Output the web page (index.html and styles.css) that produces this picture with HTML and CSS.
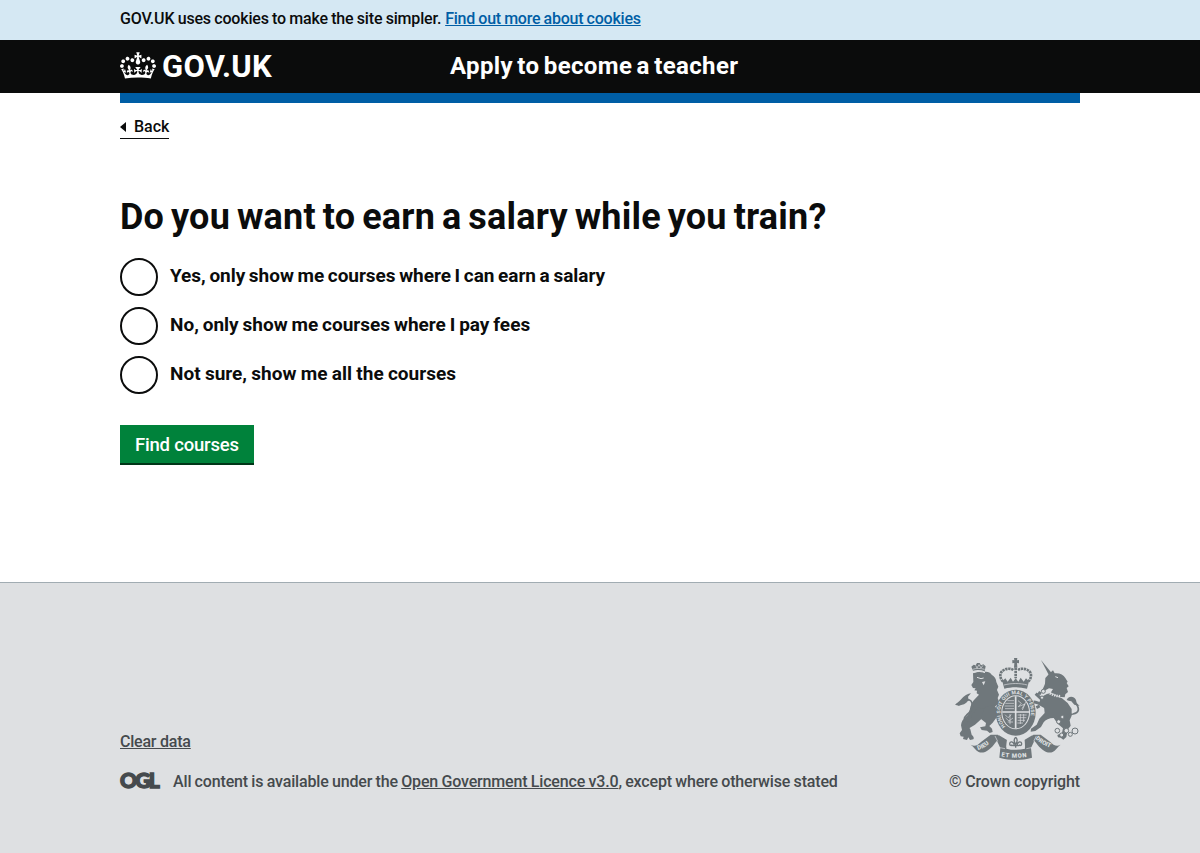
FILE: index.html
```html
<!DOCTYPE html>
<html lang="en">
<head>
<meta charset="utf-8">
<title>Do you want to earn a salary while you train?</title>
<link rel="stylesheet" href="styles.css">
</head>
<body>
<div class="cookie"><p class="container"><span class="cookie-text">GOV.UK uses cookies to make the site simpler.</span> <a class="cookie-link" href="#">Find out more about cookies</a></p></div>
<header class="header">
  <div class="container header-row">
    <a class="logo" href="#">
      <svg class="crown" viewBox="0 0 132 97" width="36" height="27" aria-hidden="true"><path fill="currentColor" fill-rule="evenodd" d="M25 30.2c3.5 1.5 7.7-.2 9.1-3.7 1.5-3.6-.2-7.8-3.9-9.2-3.6-1.4-7.6.3-9.1 3.9-1.4 3.5.3 7.5 3.9 9zM9 39.5c3.6 1.5 7.8-.2 9.2-3.7 1.5-3.6-.2-7.8-3.9-9.1-3.6-1.5-7.6.2-9.1 3.8-1.4 3.5.3 7.5 3.8 9zM4.4 57.2c3.5 1.5 7.7-.2 9.1-3.8 1.5-3.6-.2-7.7-3.9-9.1-3.5-1.5-7.6.3-9.1 3.8-1.4 3.5.3 7.6 3.9 9.1zm38.3-21.4c3.5 1.5 7.7-.2 9.1-3.8 1.5-3.6-.2-7.7-3.9-9.1-3.6-1.5-7.6.3-9.1 3.8-1.3 3.6.4 7.7 3.9 9.1zm64.4-5.6c-3.6 1.5-7.8-.2-9.1-3.7-1.5-3.6.2-7.8 3.8-9.2 3.6-1.4 7.7.3 9.2 3.9 1.3 3.5-.4 7.5-3.9 9zm15.9 9.3c-3.6 1.5-7.7-.2-9.1-3.7-1.5-3.6.2-7.8 3.7-9.1 3.6-1.5 7.7.2 9.2 3.8 1.5 3.5-.3 7.5-3.8 9zm4.7 17.7c-3.6 1.5-7.8-.2-9.2-3.8-1.5-3.6.2-7.7 3.9-9.1 3.6-1.5 7.7.3 9.2 3.8 1.3 3.5-.4 7.6-3.9 9.1zM89.3 35.8c-3.6 1.5-7.8-.2-9.2-3.8-1.4-3.6.2-7.7 3.9-9.1 3.6-1.5 7.7.3 9.2 3.8 1.4 3.6-.3 7.7-3.9 9.1zM69.7 17.7l8.9 4.7V9.3l-8.9 2.8c-.2-.3-.5-.6-.9-.9L72.4 0H59.6l3.5 11.2c-.3.3-.6.5-.9.9l-8.8-2.8v13.1l8.8-4.7c.3.3.6.7.9.9l-5 15.4v.1c-.2.8-.4 1.6-.4 2.4 0 4.1 3.1 7.5 7 8.1h.2c.3 0 .7.1 1 .1.4 0 .7 0 1-.1h.2c4-.6 7.1-4.1 7.1-8.1 0-.8-.1-1.7-.4-2.4V34l-5.1-15.4c.4-.2.7-.6 1-.9zM66 92.8c16.9 0 32.8 1.1 47.1 3.2 4-16.9 8.9-26.7 14-33.5l-9.6-3.4c1 4.9 1.1 7.2 0 10.2-1.5-1.4-3-4.3-4.2-8.7L108.6 76c2.8-2 5-3.2 7.5-3.3-4.4 9.4-10 11.9-13.6 11.2-4.3-.8-6.3-4.6-5.6-7.9 1-4.7 5.7-5.9 8-.5 4.3-8.7-3-11.4-7.6-8.8 7.1-7.2 7.9-13.5 2.1-21.1-8 6.1-8.1 12.3-4.5 20.8-4.7-5.4-12.1-2.5-9.5 6.2 3.4-5.2 7.9-2 7.2 3.1-.6 4.3-6.4 7.8-13.5 7.2-10.3-.9-10.9-8-11.2-13.8 2.5-.5 7.1 1.8 11 7.3L80.2 60c-4.1 4.4-8 5.3-12.3 5.4 1.4-4.4 8-11.6 8-11.6H55.5s6.4 7.2 7.9 11.6c-4.2-.1-8-1-12.3-5.4l1.4 16.4c3.9-5.5 8.5-7.7 10.9-7.3-.3 5.8-.9 12.8-11.1 13.8-7.2.6-12.9-2.9-13.5-7.2-.7-5 3.8-8.3 7.1-3.1 2.7-8.7-4.6-11.6-9.4-6.2 3.7-8.5 3.6-14.7-4.6-20.8-5.8 7.6-5 13.9 2.2 21.1-4.7-2.6-11.9.1-7.7 8.8 2.3-5.5 7.1-4.2 8.1.5.7 3.3-1.3 7.1-5.7 7.9-3.5.7-9-1.8-13.5-11.2 2.5.1 4.7 1.3 7.5 3.3l-4.7-15.4c-1.2 4.4-2.7 7.2-4.3 8.7-1.1-3-.9-5.3 0-10.2l-9.5 3.4c5 6.9 9.9 16.7 14 33.5 14.8-2.1 30.8-3.2 47.7-3.2z"/></svg>
      <span class="logo-text">GOV.UK</span>
    </a>
    <a class="service" href="#">Apply to become a teacher</a>
  </div>
</header>
<div class="page">
<div class="container bar"></div>
<main class="container main">
  <a class="back" href="#"><svg width="6" height="10" viewBox="0 0 6 10" aria-hidden="true"><path d="M0 5L6 0V10Z" fill="currentColor"/></svg><span class="back-text">Back</span></a>
  <h1 class="title">Do you want to earn a salary while you train?</h1>
  <div class="radios">
    <label class="radio"><i class="dot"></i><span class="radio-text salary">Yes, only show me courses where I can earn a salary</span></label>
    <label class="radio"><i class="dot"></i><span class="radio-text fees">No, only show me courses where I pay fees</span></label>
    <label class="radio"><i class="dot"></i><span class="radio-text all">Not sure, show me all the courses</span></label>
  </div>
  <button class="button">Find courses</button>
</main>
</div>
<footer class="footer">
  <div class="container footer-row">
    <div class="meta">
      <a class="clear" href="#">Clear data</a>
      <div class="licence"><span class="ogl">OGL</span><span class="lic-text">All content is available under the <a href="#">Open Government Licence v3.0</a>, except where otherwise stated</span></div>
    </div>
    <a class="copyright" href="#">
      <svg class="arms" viewBox="30 24 375 306" width="125" height="102" aria-hidden="true">
        <defs><path id="garter" d="M182 229A46 55 0 1 1 242 229"/><path id="dieu" d="M99 300Q128 292 151 263"/><path id="mon" d="M169 319Q212 328 260 318"/><path id="droit" d="M271 266Q298 291 333 298"/></defs>
        <g class="ink">
          <!-- lion -->
          <path d="M84 62l-5-12 7-6 6 2 4-7h8l4 7 7-3 7 6-3 15c-11-4-22-5-35-2z"/>
          <path d="M84 70c10-5 22-6 32-4 10-3 20 1 24 8 9 5 14 13 14 22l6 14-4 10 6 14-4 10 5 14-11 10-8 6-2 10c-8 2-15 3-22-1l-12 6-15 4-14 14-8 8-4 11 9 12 4 16c6 4 8 12 5 14l-10 2-5-8-4 8-12-3 2-7-9-1-3-9 7-10-3-14c1-12 6-18 14-25 8-6 11-12 12-20 2-16 9-28 18-36l10-11-7-4 1-8-8-1 4-6-8-1-5-9 6-9z"/>
          <path d="M70 212c8-4 10-12 12-20l18-20 20 6-10 28-20 18-20 12-7 12-9-10z"/>
          <path d="M118 172l28-8 12 15-3 23-12 16-10 10 8 8 2 10-9 3-8-7-16-2-5-8 16-3 2-10-15-12z"/>
          <path d="M30 165c5-7 11-9 17-16 10-12 22-18 31-19l-9 10 2 9-7 9c-10 8-16 5-22 10-5-2-8-3-12-3z"/>
          <path class="pen" d="M59 155c12-9 19-6 22 4 3 12-2 24-16 36-12 11-7 17 7 17"/>
          <!-- unicorn -->
          <path d="M288 30l25 48 10-5z"/>
          <path d="M301 84l13-14 10-9 5 9c14-2 26 4 32 14l7 11-3 4 6 10-6 5 4 12-8 7-2 9c-14-1-30-6-42-14l7-11-12-2-13 7-6-4 4-9 3-8z"/>
          <path class="limb" d="M318 152C301 158 300 146 288 146L272 131M312 176C296 172 284 156 266 156M288 132l-8-5M284 168l-10 5"/>
          <path d="M311 129l40 16 17 14 12 18 0 20-6 14 3 16-9 12-4 22-9 8-8-6-8-1-2-7 14-7 3-13-16-14-12-17c-14 0-24 5-30 13l-8 14-17 12-14 2 1-9 17-12 8-18 16-17-2-20-14-12 6-16z"/>
          <path d="M365 150c6-14 22-12 28 0l2 9 9 9-16-4-9-10-8-2z"/>
          <path class="pen" d="M390 157c16 20 12 32-6 35-12 1-18 5-19 14"/>
          <!-- crown -->
          <path d="M207 24h10l-1 7 6-1v10l-6-1 1 14h-10l1-14-6 1v-10l6 1z"/>
          <path class="pen dots" d="M205 60c-14-9-39-1-39 16 0 10 5 15 9 20M219 60c14-9 39-1 39 16 0 10-5 15-9 20"/>
          <path class="pen dots" d="M212 53v32"/>
          <path d="M172 94l9-9 7 10 9-12 7 12 8-10 8 10 7-12 9 12 7-10 9 9-6 22c-22-6-46-6-68 0z"/>
          <!-- garter -->
          <ellipse cx="212" cy="188" rx="60" ry="69"/>
        </g>
        <g class="cut">
          <path class="nick thin" d="M177 105c23-6 47-6 70 0"/>
          <path class="nick thin" d="M83 58c12-4 24-3 36 0M92 46l4 8 6-10 6 10 6-8"/>
          <path class="nick" d="M86 67c12-4 24-3 34 1M96 82l12 4 8-2"/>
          <path d="M111 96l10-2-5 12z"/>
          <path class="nick dash" d="M303 122c12 10 28 16 45 17"/>
          <path class="nick" d="M331 80l8 3"/>
          <ellipse cx="212" cy="187" rx="43" ry="51"/>
          <text class="motto"><textPath href="#garter">HONI SOIT QUI MAL Y PENSE</textPath></text>
        </g>
        <g class="ink">
          <ellipse cx="212" cy="187" rx="40" ry="48"/>
          <path class="cutline" d="M172 186h80M212 139v96"/>
          <path class="nick thin" d="M181 160h26M179 168h28M180 176h27M187 152h20M219 152l10 8-9 10 20-8-8 18M243 156l-12 20M180 194l9 9 10-9M182 204l10 9 12-9M188 216h16M195 192v31M218 195h27M218 203h26M218 211h22M217 219h17M226 192v30M236 192v24"/>
          <!-- ribbons -->
          <path d="M77 284c12 7 22 1 32-9l28-21h22l6 8-14 16c-14 20-34 35-50 28-8-4-15-16-24-22z"/>
          <path d="M347 284c-12 7-22 1-32-9l-28-21h-22l-6 8 14 16c14 20 34 35 50 28 8-4 15-16 24-22z"/>
          <path d="M153 266l9-10 24 14-2 26q28 7 56 0l-2-26 24-14 9 10-13 28 3 29c-32 9-66 9-98 0l3-29z"/>
        </g>
        <g class="cut">
          <path d="M187 254q25 10 50 0l3 38q-28 8-56 0z"/>
          <path class="nick thin" d="M160 292l20 4M264 292l-20 4M150 258l8 16M274 258l-8 16"/>
          <text class="ribbon"><textPath href="#dieu">DIEU</textPath></text>
          <text class="ribbon mon"><textPath href="#mon">ET MON</textPath></text>
          <text class="ribbon"><textPath href="#droit">DROIT</textPath></text>
        </g>
        <path class="lily" d="M212 262q-9 9 0 21q9-12 0-21M208 287c-2-14-14-14-14-5 0 5 6 6 8 2M216 287c2-14 14-14 14-5 0 5-6 6-8 2M202 287h20M212 282v11"/>
        <g class="chain">
          <circle cx="295" cy="124" r="6"/><circle cx="291" cy="143" r="5"/><circle cx="341" cy="215" r="6"/><circle cx="352" cy="201" r="5"/><circle cx="337" cy="242" r="7"/><circle cx="350" cy="255" r="6"/><circle cx="364" cy="242" r="7"/><circle cx="376" cy="253" r="6"/><circle cx="390" cy="243" r="9"/>
        </g>
      </svg>
      <span>© Crown copyright</span>
    </a>
  </div>
</footer>
</body>
</html>
```
FILE: styles.css
```css
* { box-sizing: border-box; }
body { margin: 0; background: #dee0e2; color: #0b0c0c; font-family: Roboto, "Liberation Sans", sans-serif; font-size: 16px; line-height: 20px; font-weight: 500; }
a { color: inherit; }
.container { width: 960px; margin: 0 auto; }
.cookie { height: 40px; background: #d5e8f3; padding-top: 9px; }
.cookie-text { letter-spacing: -.17px; word-spacing: -.5px; }
.cookie-link { color: #005ea5; letter-spacing: -.23px; word-spacing: -.5px; }
.header { height: 53px; background: #0b0c0c; color: #fff; }
.header-row { display: flex; }
.logo { width: 330px; height: 53px; display: flex; gap: 6px; align-items: flex-start; padding-top: 12px; text-decoration: none; }
.logo-text { font-size: 31px; font-weight: 700; line-height: 30px; letter-spacing: .3px; }
.service { font-size: 24px; line-height: 30px; padding-top: 11px; font-weight: 700; text-decoration: none; letter-spacing: .37px; word-spacing: -2px; }
.page { background: #fff; }
.bar { height: 10px; background: #005ea5; }
.main { height: 479px; padding-top: 14px; }
.back { display: inline-flex; align-items: center; gap: 8px; height: 22px; padding-bottom: 1px; border-bottom: 1px solid #0b0c0c; text-decoration: none; }
.back-text { line-height: 18px; }
.title { margin: 57px 0 20px; font-size: 36px; line-height: 42px; font-weight: 700; letter-spacing: .2px; word-spacing: -2.2px; }
.radios { display: grid; gap: 11px; }
.radio { display: flex; gap: 12px; height: 38px; }
.dot { width: 38px; height: 38px; border: 2px solid #0b0c0c; border-radius: 50%; }
.radio-text { font-size: 19px; font-weight: 700; line-height: 25px; padding-top: 5px; }
.salary { word-spacing: -1px; letter-spacing: -.04px; }
.fees { word-spacing: -.85px; }
.all { word-spacing: -.4px; }
.button { margin-top: 31px; width: 134px; height: 40px; border: 0; border-bottom: 2px solid #003618; background: #00823b; color: #fff; font: 500 18.5px/36px Roboto, sans-serif; letter-spacing: -.2px; padding: 2px 0 0 15px; text-align: left; white-space: nowrap; }
.footer { height: 271px; background: #dee0e2; border-top: 1px solid #a1acb2; color: #454a4d; padding-top: 75px; }
.footer-row { display: flex; justify-content: space-between; align-items: flex-end; }
.meta { display: flex; flex-direction: column; align-items: flex-start; gap: 20px; }
.clear { letter-spacing: -.22px; }
.licence { display: flex; gap: 12px; }
.lic-text { letter-spacing: -.155px; word-spacing: -.5px; }
.ogl { width: 41px; font: 900 21px/16px Lato, sans-serif; letter-spacing: -1.8px; -webkit-text-stroke: 1.4px #454a4d; }
.copyright { display: flex; flex-direction: column; align-items: flex-end; gap: 12px; text-decoration: none; letter-spacing: -.14px; }
.ink { fill: #6f777b; }
.pen, .limb { fill: none; stroke: #6f777b; stroke-width: 5; }
.limb { stroke-width: 9; stroke-linejoin: round; }
.dots { stroke-width: 8; stroke-dasharray: 7 2; }
.cut { fill: #dee0e2; }
.nick { fill: none; stroke-width: 3; stroke: #dee0e2; }
.thin { stroke-width: 2; }
.dash { stroke-width: 8; stroke-dasharray: 4 3; }
.cutline { stroke: #dee0e2; stroke-width: 5; }
.motto { font: 700 15px Roboto, sans-serif; letter-spacing: .6px; }
.ribbon { font: 900 18px Roboto, sans-serif; }
.mon { letter-spacing: 2px; }
.lily { fill: none; stroke: #6f777b; stroke-width: 4; }
.chain { fill: #dee0e2; stroke: #6f777b; stroke-width: 3; }
```
